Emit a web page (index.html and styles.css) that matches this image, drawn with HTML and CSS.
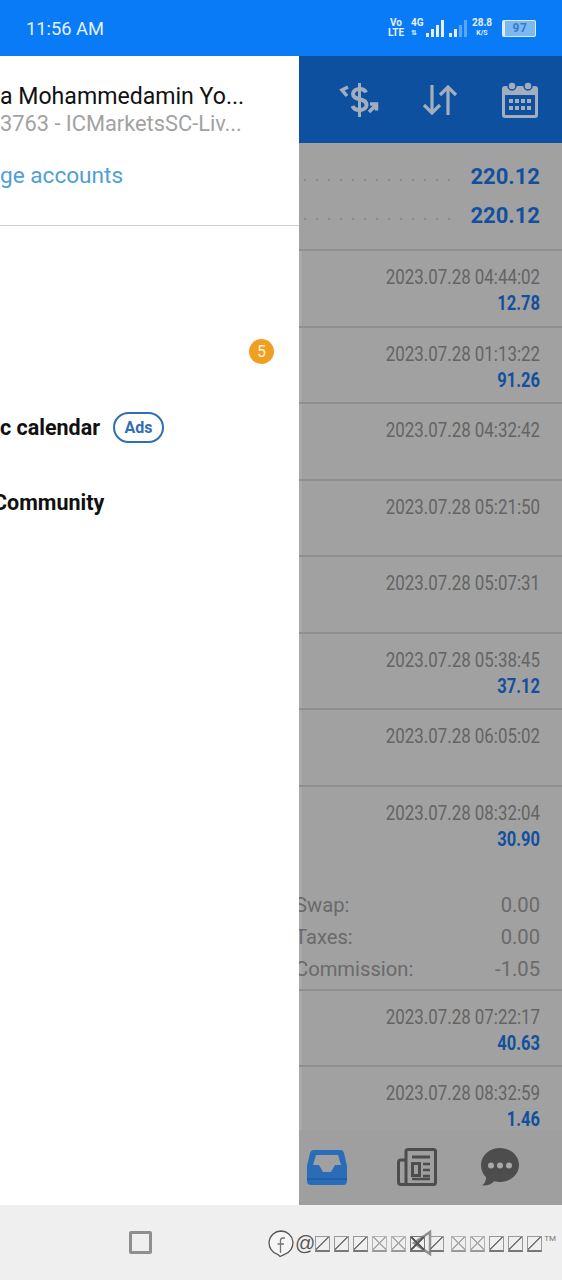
FILE: index.html
```html
<!DOCTYPE html>
<html lang="en">
<head>
  <meta charset="UTF-8">
  <title>Trade history</title>
  <meta name="viewport" content="width=device-width, initial-scale=1.0">
  <link rel="stylesheet" href="styles.css">
</head>
<body>

  <div class="statusbar">
    <span class="clock">11:56 AM</span>
    <div class="status-icons">
      <span class="stack volte"><b>Vo</b><b>LTE</b></span>
      <span class="stack net"><b>4G</b><b class="updown">⇅</b></span>
      <span class="bars"><i class="b1"></i><i class="b2"></i><i class="b3"></i><i class="b4"></i></span>
      <span class="bars dim"><i class="b1"></i><i class="b2"></i><i class="b3"></i><i class="b4"></i></span>
      <span class="stack speed"><b>28.8</b><b class="unit">K/S</b></span>
      <span class="battery">97</span>
    </div>
  </div>

  <div class="main">
    <div class="drawer">
      <div class="account">
        <div class="acc-name">a Mohammedamin Yo...</div>
        <div class="acc-server">3763 - ICMarketsSC-Liv...</div>
        <div class="acc-manage">ge accounts</div>
      </div>
      <div class="menu-item menu-first"></div>
      <div class="menu-item menu-right"><span class="badge">5</span></div>
      <div class="menu-item"><span class="menu-label">c calendar</span><span class="ads">Ads</span></div>
      <div class="menu-item"><span class="menu-label clip">Community</span></div>
    </div>

    <div class="content">
      <div class="topbar">
        <svg class="top-icon" width="40" height="38" viewBox="0 0 40 38" fill="none" stroke="#a3aebd" stroke-width="4">
          <path d="M27 11.500c-1-2.500-3.500-3.500-6.500-3.500-3.500 0-6.500 1.800-6.500 5 0 6.800 13.500 3.500 13.500 11 0 3.200-3 5-7 5-3.500 0-6-1.500-7-4"/>
          <path d="M20.500 2v34" stroke-width="3"/>
          <path d="M9 6 3 9l5 6" stroke-width="3.500"/>
          <path d="M30 31l7-7M31 23h6.500v6.500" stroke-width="3.500"/>
        </svg>
        <svg class="top-icon arrows" width="36" height="32" viewBox="0 0 36 32" fill="none" stroke="#a3aebd" stroke-width="3.200">
          <path d="M10 1v28M2 21l8 8 8-8"/>
          <path d="M26 31V3M18 11l8-8 8 8"/>
        </svg>
        <svg class="top-icon cal" width="38" height="38" viewBox="0 0 38 38">
          <rect x="1" y="5" width="36" height="32" rx="3" fill="#a3aebd"/>
          <rect x="4" y="14" width="30" height="20" fill="#0e50a0"/>
          <circle cx="11" cy="5" r="4" fill="#a3aebd" stroke="#0e50a0" stroke-width="1.500"/>
          <circle cx="27" cy="5" r="4" fill="#a3aebd" stroke="#0e50a0" stroke-width="1.500"/>
          <g fill="#a3aebd">
            <rect x="8" y="18" width="4" height="4"/><rect x="14" y="18" width="4" height="4"/><rect x="20" y="18" width="4" height="4"/><rect x="26" y="18" width="4" height="4"/>
            <rect x="8" y="25" width="4" height="4"/><rect x="14" y="25" width="4" height="4"/><rect x="20" y="25" width="4" height="4"/><rect x="26" y="25" width="4" height="4"/>
          </g>
        </svg>
      </div>

      <div class="balance">
        <div class="bal-row"><span class="dots"></span><span class="bal-val">220.12</span></div>
        <div class="bal-row"><span class="dots"></span><span class="bal-val">220.12</span></div>
      </div>

      <div class="deals">
        <div class="deal"><span class="date">2023.07.28 04:44:02</span><span class="profit">12.78</span></div>
        <div class="deal"><span class="date">2023.07.28 01:13:22</span><span class="profit">91.26</span></div>
        <div class="deal"><span class="date">2023.07.28 04:32:42</span></div>
        <div class="deal"><span class="date">2023.07.28 05:21:50</span></div>
        <div class="deal"><span class="date">2023.07.28 05:07:31</span></div>
        <div class="deal"><span class="date">2023.07.28 05:38:45</span><span class="profit">37.12</span></div>
        <div class="deal"><span class="date">2023.07.28 06:05:02</span></div>
        <div class="deal deal-open">
          <span class="date">2023.07.28 08:32:04</span><span class="profit">30.90</span>
          <div class="details">
            <div class="detail"><span class="cut">Swap:</span><span>0.00</span></div>
            <div class="detail"><span class="cut">Taxes:</span><span>0.00</span></div>
            <div class="detail"><span class="cut">Commission:</span><span>-1.05</span></div>
          </div>
        </div>
        <div class="deal"><span class="date">2023.07.28 07:22:17</span><span class="profit">40.63</span></div>
        <div class="deal"><span class="date">2023.07.28 08:32:59</span><span class="profit">1.46</span></div>
      </div>

      <div class="tabs">
        <svg class="tab-inbox" width="40" height="36" viewBox="0 0 40 36">
          <path d="M7 1h26a4 4 0 0 1 4 3l3 13v15a4 4 0 0 1-4 4H4a4 4 0 0 1-4-4V17L3 4a4 4 0 0 1 4-3z" fill="#2b6cb8"/>
          <path d="M6 16 9 6h22l3 10h-6l-4 7h-8l-4-7z" fill="#a0a0a0"/>
          <path d="M0 30h40" stroke="#1f5ca6" stroke-width="1.500"/>
        </svg>
        <svg class="tab-news" width="40" height="38" viewBox="0 0 40 38" fill="none" stroke="#4d4d4d">
          <rect x="9" y="1.500" width="29.500" height="35" rx="2" stroke-width="3"/>
          <path d="M8 12H4a2.500 2.500 0 0 0-2.500 2.500V34A2.500 2.500 0 0 0 4 36.500h6" stroke-width="3"/>
          <path d="M15 9h18" stroke-width="3"/>
          <rect x="15.500" y="15.500" width="7" height="12" stroke-width="3"/>
          <path d="M26 16h7M26 22h7M26 28h7M15 31h18" stroke-width="2.600"/>
        </svg>
        <svg class="tab-chat" width="38" height="38" viewBox="0 0 38 38">
          <path d="M19 0c10.500 0 19 7.500 19 17s-8.500 17-19 17c-2 0-4-.3-5.800-.8C10.500 36 6 38 1 37.500c2.500-2 4-4.500 4.200-8C2 26.500 0 22 0 17 0 7.500 8.500 0 19 0z" fill="#4d4d4d"/>
          <circle cx="10" cy="17.500" r="3" fill="#a8a8a8"/><circle cx="19" cy="17.500" r="3" fill="#a8a8a8"/><circle cx="28" cy="17.500" r="3" fill="#a8a8a8"/>
        </svg>
      </div>
    </div>
  </div>

  <div class="navbar">
    <span class="nav-cell"><span class="nav-square"></span></span>
    <span class="nav-cell">
      <svg width="24" height="26" viewBox="0 0 24 26" fill="none" stroke="#8f8f8f" stroke-width="2.500"><path d="M20 2 4 13l16 11z"/></svg>
    </span>
    <div class="watermark">
      <svg width="26" height="27" viewBox="0 0 26 27" fill="#f6f6f6" stroke="#555" stroke-width="1.300">
        <path d="M13 1a12 12 0 0 1 3 23.600L12 26.500 10 24.600A12 12 0 0 1 13 1z"/>
        <path d="M17 8h-2a2.500 2.500 0 0 0-2.500 2.500V23M9.500 14H16" fill="none" stroke="#777"/>
      </svg>
      <span class="at">@</span>
      <span class="tofu"></span><span class="tofu"></span><span class="tofu"></span><span class="tofu x"></span><span class="tofu x"></span><span class="tofu x dark"></span><span class="tofu"></span>
      <span class="tofu-gap"></span>
      <span class="tofu x"></span><span class="tofu x"></span><span class="tofu"></span><span class="tofu"></span><span class="tofu"></span>
      <span class="tm">TM</span>
    </div>
  </div>

</body>
</html>
```

FILE: styles.css
```css
* {
  box-sizing: border-box;
}
body {
  margin: 0;
  width: 562px;
  height: 1280px;
  overflow: hidden;
  font-family: Roboto, "Liberation Sans", sans-serif;
  display: flex;
  flex-direction: column;
  background: #efefef;
}

/* status bar */
.statusbar {
  height: 56px;
  background: #0a7bf7;
  color: #e4f0ff;
  display: flex;
  align-items: center;
  justify-content: space-between;
  padding: 0 26px;
}
.clock {
  font-size: 18.300px;
}
.status-icons {
  display: flex;
  align-items: center;
}
.stack {
  display: flex;
  flex-direction: column;
  align-items: center;
  font-size: 10px;
  line-height: 10px;
}
.stack b {
  font-weight: 700;
}
.volte {
  width: 16px;
}
.net {
  width: 14px;
  margin-left: 7px;
  align-items: flex-start;
}
.updown {
  font-family: "DejaVu Sans", sans-serif;
  font-size: 7px;
}
.speed {
  margin-left: 3px;
  width: 24px;
}
.speed .unit {
  font-size: 7px;
}
.bars {
  display: flex;
  align-items: flex-end;
  gap: 2px;
  height: 18px;
  margin-left: 1px;
}
.bars.dim {
  margin-left: 5px;
}
.bars i {
  width: 3px;
  background: #e4f0ff;
}
.bars .b1 { height: 4px; }
.bars .b2 { height: 8px; }
.bars .b3 { height: 12px; }
.bars .b4 { height: 17px; }
.bars.dim .b3, .bars.dim .b4 {
  background: #5aa6f5;
}
.battery {
  width: 34px;
  height: 17px;
  margin-left: 8px;
  border: 1.500px solid #dcecff;
  border-left-width: 3px;
  border-radius: 2px;
  background: #7db8f0;
  color: #2f7dd0;
  font-size: 12px;
  font-weight: 700;
  line-height: 14px;
  text-align: center;
  letter-spacing: .5px;
}

.main {
  flex: 1;
  display: flex;
  min-height: 0;
}

/* drawer */
.drawer {
  width: 299px;
  background: #fff;
  overflow: hidden;
}
.account {
  height: 170px;
  border-bottom: 1px solid #cfcfcf;
  white-space: nowrap;
  padding-top: 27px;
}
.acc-name {
  font-size: 23.100px;
  line-height: 27px;
  color: #111;
}
.acc-server {
  font-size: 21.800px;
  line-height: 28px;
  color: #a2a2a2;
}
.acc-manage {
  font-size: 22.600px;
  line-height: 28px;
  margin-top: 24px;
  color: #4f9fd6;
}
.menu-item {
  height: 75.500px;
  display: flex;
  align-items: center;
  white-space: nowrap;
}
.menu-first {
  height: 88px;
}
.menu-right {
  justify-content: flex-end;
  padding-right: 25px;
}
.menu-label {
  font-size: 21.500px;
  font-weight: 700;
  color: #111;
}
.clip {
  margin-left: -7px;
}
.badge {
  width: 25px;
  height: 25px;
  border-radius: 50%;
  background: #f0a020;
  color: #fdf3df;
  font-size: 16px;
  line-height: 25px;
  text-align: center;
}
.ads {
  margin-left: 13px;
  width: 51px;
  height: 31px;
  border: 2px solid #2f6db5;
  border-radius: 16px;
  color: #2f6db5;
  font-size: 16px;
  font-weight: 700;
  line-height: 27px;
  text-align: center;
}

/* right side behind the dim */
.content {
  flex: 1;
  min-width: 0;
  display: flex;
  flex-direction: column;
  background: #a1a1a1;
  overflow: hidden;
}
.topbar {
  height: 87px;
  flex-shrink: 0;
  background: #0e50a0;
  display: flex;
  align-items: center;
  padding-left: 40px;
}
.arrows {
  margin-left: 43px;
}
.cal {
  margin-left: 43px;
}
.balance {
  height: 108px;
  flex-shrink: 0;
  padding: 14px 22px 0 0;
  border-bottom: 2px solid #8f8f8f;
}
.bal-row {
  display: flex;
  align-items: center;
  height: 39px;
}
.dots {
  flex: 1;
  height: 4px;
  margin: 6px 16px 0 0;
  background: radial-gradient(circle, #8b8b8b 1.200px, transparent 1.600px) 0 0 / 12px 4px repeat-x;
}
.bal-val {
  font-size: 22px;
  font-weight: 700;
  color: #11509f;
}

.deals {
  flex: 1;
  min-height: 0;
  overflow: hidden;
  box-shadow: inset 3px 0 0 #a9a9a9;
}
.deal {
  height: 76.500px;
  padding: 14px 22px 0 0;
  border-bottom: 2px solid #8f8f8f;
  text-align: right;
}
.deal:last-child {
  border-bottom: none;
}
.deal-open {
  height: 204px;
}
.date, .profit {
  display: block;
  font-size: 20px;
  line-height: 24px;
  transform: scaleX(.845);
  transform-origin: right center;
}
.date {
  color: #646464;
}
.profit {
  margin-top: 2px;
  font-weight: 700;
  color: #11509f;
  transform: scaleX(.825);
}
.details {
  margin-top: 39px;
  font-size: 20.200px;
  color: #6a6a6a;
}
.detail {
  display: flex;
  justify-content: space-between;
  height: 32px;
  line-height: 31px;
}
.cut {
  margin-left: -4px;
}

.tabs {
  height: 75px;
  flex-shrink: 0;
  background: #9f9f9f;
  display: flex;
  align-items: center;
  padding: 0 0 2px 8px;
}
.tab-news {
  margin-left: 50px;
}
.tab-chat {
  margin-left: 44px;
}

/* navigation bar */
.navbar {
  height: 75px;
  position: relative;
  display: grid;
  grid-template-columns: 1fr 1fr;
  background: #efefef;
}
.nav-cell {
  display: flex;
  align-items: center;
  justify-content: center;
}
.nav-square {
  width: 23px;
  height: 23px;
  border: 3px solid #8f8f8f;
  border-radius: 2px;
}
.watermark {
  position: absolute;
  left: 268px;
  top: 24px;
  display: flex;
  align-items: center;
  gap: 4px;
  height: 28px;
}
.at {
  font-family: "Liberation Sans", sans-serif;
  font-size: 20px;
  color: #555;
  margin: 0 -4px 0 -3px;
  text-shadow: 0 0 1px #fff;
}
.tofu {
  width: 15px;
  height: 16px;
  margin-top: 2px;
  border: 1px solid #999;
  border-bottom: 2px solid #777;
  background: linear-gradient(to top left, transparent 46%, #777 48%, #777 54%, transparent 56%);
}
.tofu.x {
  border-color: #b5b5b5;
  border-bottom-color: #999;
  background:
    linear-gradient(to top right, transparent 46%, #aaa 48%, #aaa 54%, transparent 56%),
    linear-gradient(to top left, transparent 46%, #aaa 48%, #aaa 54%, transparent 56%);
}
.tofu.dark {
  border-color: #777;
  background:
    linear-gradient(to top right, transparent 44%, #555 47%, #555 55%, transparent 58%),
    linear-gradient(to top left, transparent 44%, #555 47%, #555 55%, transparent 58%);
}
.tofu-gap {
  width: 0;
  margin-left: -1px;
}
.tm {
  font-size: 8px;
  color: #777;
  margin: -10px 0 0 -2px;
}
```
